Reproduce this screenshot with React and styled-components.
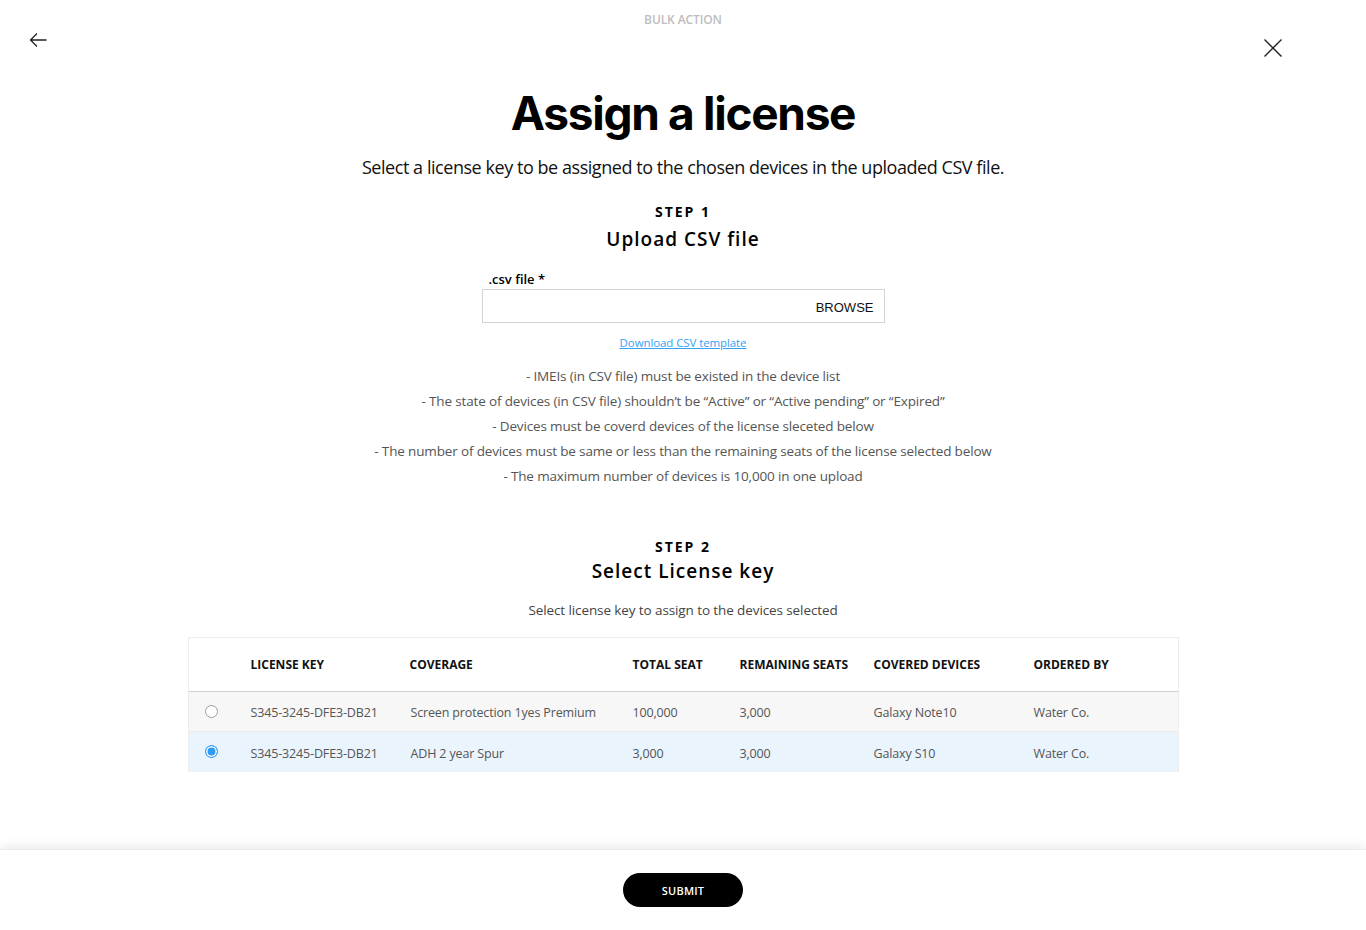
import React, { useState } from 'react';
import styled, { createGlobalStyle } from 'styled-components';

const GlobalStyle = createGlobalStyle`
  html, body { margin: 0; padding: 0; background: #fff; }
  body { font-family: "Open Sans", "Noto Sans", sans-serif; color: #000; }
  * { box-sizing: border-box; }
`;

const Page = styled.div`
  display: flex;
  flex-direction: column;
  height: 100vh;
`;

const Scroll = styled.div`
  flex: 1;
  overflow: hidden;
`;

const TopBar = styled.div`
  display: grid;
  grid-template-columns: 1fr auto 1fr;
  align-items: start;
  padding: 0 29px;
  height: 70px;
`;

const IconButton = styled.button`
  border: 0;
  background: none;
  padding: 0;
  margin-top: ${p => p.$top}px;
  margin-right: ${p => p.$right || 0}px;
  justify-self: ${p => p.$side};
  width: 18px;
  height: 18px;
  display: flex;
  cursor: pointer;
`;

const Overline = styled.div`
  margin-top: 11px;
  font-size: 12px;
  font-weight: 600;
  color: #bdbdbd;
  letter-spacing: -0.1px;
`;

const Content = styled.div`
  display: flex;
  flex-direction: column;
  align-items: center;
  text-align: center;
`;

const Title = styled.h1`
  margin: 13px 0 0;
  font-family: "Inter", sans-serif;
  font-size: 46px;
  font-weight: 700;
  letter-spacing: -1.3px;
  line-height: 60px;
`;

const Lead = styled.p`
  margin: 11px 0 0;
  font-size: 18px;
  line-height: 26px;
  letter-spacing: -0.45px;
  color: #111;
`;

const StepLabel = styled.div`
  margin-top: ${p => p.$top}px;
  font-size: 14px;
  font-weight: 700;
  letter-spacing: 2px;
  line-height: 20px;
`;

const StepTitle = styled.h2`
  margin: ${p => p.$top}px 0 0;
  font-size: 19px;
  font-weight: 600;
  letter-spacing: 1px;
  line-height: 26px;
`;

const Field = styled.div`
  margin-top: 18px;
  width: 403px;
  text-align: left;
`;

const FieldLabel = styled.label`
  display: block;
  padding-left: 7px;
  font-size: 13px;
  font-weight: 600;
  line-height: 18px;
`;

const FileBox = styled.div`
  margin-top: 1px;
  height: 34px;
  border: 1px solid #d4d4d4;
  display: flex;
  align-items: center;
  justify-content: flex-end;
  padding: 2px 10px 0 0;
`;

const Browse = styled.span`
  font-family: "Liberation Sans", Arial, sans-serif;
  font-size: 13px;
  color: #111;
`;

const TemplateLink = styled.a`
  margin-top: 12px;
  font-size: 11.5px;
  letter-spacing: -0.1px;
  color: #35a2f4;
  text-decoration: underline;
  line-height: 16px;
`;

const Rules = styled.ul`
  list-style: none;
  margin: 13px 0 0;
  padding: 0;
  font-size: 13.5px;
  letter-spacing: -0.15px;
  line-height: 25px;
  color: #555;
`;

const Hint = styled.p`
  margin: 16px 0 0;
  font-size: 13.5px;
  letter-spacing: -0.1px;
  line-height: 20px;
  color: #444;
`;

const Table = styled.div`
  margin-top: 17px;
  width: 991px;
  border: 1px solid #ededed;
  border-bottom: 0;
  text-align: left;
`;

const Row = styled.div`
  display: grid;
  grid-template-columns: 62px 159px 223px 107px 134px 160px 1fr;
  align-items: center;
  height: ${p => (p.$head ? 54 : 40)}px;
  background: ${p => (p.$head ? '#fff' : p.$active ? '#eaf4fd' : '#f7f7f7')};
  border-bottom: 1px solid ${p => (p.$head ? '#cfcfcf' : '#ececec')};
  cursor: ${p => (p.$head ? 'default' : 'pointer')};
  &:last-child { border-bottom: 0; }
`;

const HeadCell = styled.div`
  font-size: 12px;
  font-weight: 700;
  color: #111;
`;

const Cell = styled.div`
  font-size: 12.5px;
  letter-spacing: -0.15px;
  color: #555;
  padding-top: 2px;
  padding-left: ${p => (p.$shift ? 1 : 0)}px;
`;

const RadioCell = styled.div`
  display: flex;
  padding: 0 0 1px 16px;
`;

const Radio = styled.span`
  width: 13px;
  height: 13px;
  border-radius: 50%;
  border: 1px solid ${p => (p.$checked ? '#2f9bf4' : '#9e9e9e')};
  background: ${p => (p.$checked ? '#2f9bf4' : '#fff')};
  box-shadow: ${p => (p.$checked ? 'inset 0 0 0 1.5px #fff' : 'none')};
`;

const Footer = styled.footer`
  height: 81px;
  flex-shrink: 0;
  display: flex;
  align-items: center;
  justify-content: center;
  background: #fff;
  box-shadow: 0 -3px 10px rgba(0, 0, 0, 0.08);
  border-top: 1px solid #ececec;
`;

const SubmitButton = styled.button`
  width: 120px;
  height: 34px;
  border: 0;
  border-radius: 17px;
  background: #000;
  color: #fff;
  font-family: "Open Sans", sans-serif;
  font-size: 11px;
  font-weight: 600;
  letter-spacing: 0.2px;
  cursor: pointer;
`;

const rules = [
  '- IMEIs (in CSV file) must be existed in the device list',
  '- The state of devices (in CSV file) shouldn\u2019t be \u201cActive\u201d or \u201cActive pending\u201d or \u201cExpired\u201d',
  '- Devices must be coverd devices of the license sleceted below',
  '- The number of devices must be same or less than the remaining seats of the license selected below',
  '- The maximum number of devices is 10,000 in one upload',
];

const columns = ['LICENSE KEY', 'COVERAGE', 'TOTAL SEAT', 'REMAINING SEATS', 'COVERED DEVICES', 'ORDERED BY'];

const licenses = [
  { key: 'S345-3245-DFE3-DB21', coverage: 'Screen protection 1yes Premium', total: '100,000', remaining: '3,000', devices: 'Galaxy Note10', by: 'Water Co.' },
  { key: 'S345-3245-DFE3-DB21', coverage: 'ADH 2 year Spur', total: '3,000', remaining: '3,000', devices: 'Galaxy S10', by: 'Water Co.' },
];

function BackIcon() {
  return (
    <svg width="18" height="18" viewBox="0 0 18 18" fill="none" stroke="#222" strokeWidth="1.3">
      <path d="M1.5 9h16M8 2.5L1.5 9 8 15.5" />
    </svg>
  );
}

function CloseIcon() {
  return (
    <svg width="18" height="18" viewBox="0 0 18 18" fill="none" stroke="#222" strokeWidth="1.4">
      <path d="M0.5 0.5l17 17M17.5 0.5l-17 17" />
    </svg>
  );
}

export default function App() {
  const [selected, setSelected] = useState(1);

  return (
    <Page>
      <GlobalStyle />
      <Scroll>
        <TopBar>
          <IconButton $top={31} $side="start" aria-label="Back"><BackIcon /></IconButton>
          <Overline>BULK ACTION</Overline>
          <IconButton $top={39} $right={55} $side="end" aria-label="Close"><CloseIcon /></IconButton>
        </TopBar>
        <Content>
          <Title>Assign a license</Title>
          <Lead>Select a license key to be assigned to the chosen devices in the uploaded CSV file.</Lead>

          <StepLabel $top={22}>STEP 1</StepLabel>
          <StepTitle $top={4}>Upload CSV file</StepTitle>
          <Field>
            <FieldLabel>.csv file *</FieldLabel>
            <FileBox><Browse>BROWSE</Browse></FileBox>
          </Field>
          <TemplateLink href="#">Download CSV template</TemplateLink>
          <Rules>
            {rules.map(r => <li key={r}>{r}</li>)}
          </Rules>

          <StepLabel $top={48}>STEP 2</StepLabel>
          <StepTitle $top={1}>Select License key</StepTitle>
          <Hint>Select license key to assign to the devices selected</Hint>

          <Table>
            <Row $head>
              <div />
              {columns.map(c => <HeadCell key={c}>{c}</HeadCell>)}
            </Row>
            {licenses.map((l, i) => (
              <Row key={i} $active={selected === i} onClick={() => setSelected(i)}>
                <RadioCell><Radio $checked={selected === i} /></RadioCell>
                <Cell>{l.key}</Cell>
                <Cell $shift>{l.coverage}</Cell>
                <Cell>{l.total}</Cell>
                <Cell>{l.remaining}</Cell>
                <Cell>{l.devices}</Cell>
                <Cell>{l.by}</Cell>
              </Row>
            ))}
          </Table>
        </Content>
      </Scroll>
      <Footer>
        <SubmitButton>SUBMIT</SubmitButton>
      </Footer>
    </Page>
  );
}
